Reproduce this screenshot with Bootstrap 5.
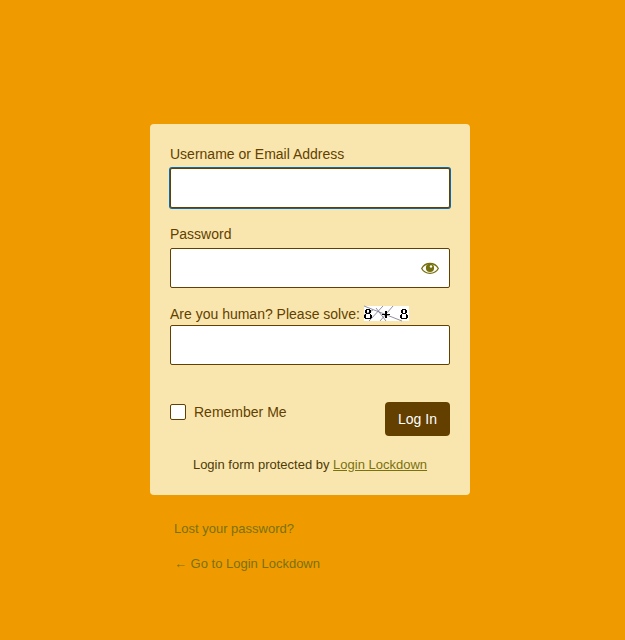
<!DOCTYPE html>
<html lang="en">
<head>
<meta charset="utf-8">
<meta name="viewport" content="width=device-width, initial-scale=1">
<title>Log In</title>
<link href="https://cdn.jsdelivr.net/npm/bootstrap@5.3.0/dist/css/bootstrap.min.css" rel="stylesheet">
<style>
body{background:#ef9b00;font-family:"Liberation Sans",Arial,sans-serif;font-size:14px;line-height:21px;color:#633f00;padding-top:124px}
.login-wrap{width:320px;margin-left:150px}
.login-card{height:371px;padding:20px;background:#f9e6ae;border:0;border-radius:4px;color:#633f00}
.login-card .form-label{margin-bottom:3px;height:21px}
.login-card .form-control{height:40px;padding:3px 5px;border:1px solid #633f00;border-radius:2px;font-size:24px;background:#fff;box-shadow:none}
.login-card .field-active{box-shadow:0 0 0 1px #0e68ae}
.field-gap{margin-bottom:16px}
.login-card .captcha-label{margin-bottom:0}
.captcha{margin-left:4px}
.eye{right:10px;top:10px}
.action-row{margin-top:37px;height:34px}
.login-card .form-check-input{width:16px;height:16px;margin:2px 8px 0 0;border:1px solid #633f00;border-radius:2px;background:#fff}
.btn-login{width:65px;height:34px;padding:0;background:#633f00;color:#fff;font-size:14px;border:0;border-radius:4px}
.btn-login:hover{background:#523400;color:#fff}
.protected{font-size:13px;line-height:20px;margin-top:19px;color:#4f3b08}
.protected a,.below a{color:#7a7110}
.below{font-size:13px;line-height:19px;padding:24px 24px 0}
</style>
<script src="https://cdn.jsdelivr.net/npm/bootstrap@5.3.0/dist/js/bootstrap.bundle.min.js"></script>
</head>
<body>
<main class="login-wrap">
  <form class="card login-card">
    <div class="field-gap">
      <label class="form-label d-block" for="user">Username or Email Address</label>
      <input id="user" class="form-control field-active" type="text">
    </div>
    <div class="field-gap">
      <label class="form-label d-block" for="pass">Password</label>
      <div class="position-relative">
        <input id="pass" class="form-control" type="password">
        <svg class="eye position-absolute" width="20" height="20" viewBox="0 0 20 20"><path d="M1.700 10.500C3.400 7.300 6.400 5.500 10 5.500S16.600 7.300 18.300 10.500C16.600 13.700 13.600 15.300 10 15.300S3.400 13.700 1.700 10.500Z" fill="none" stroke="#77700f" stroke-width="1.300"/><circle cx="10" cy="9.900" r="4.100" fill="#77700f"/><circle cx="11" cy="8.500" r="1.200" fill="#fff"/></svg>
      </div>
    </div>
    <div>
      <label class="form-label captcha-label d-flex" for="answer">Are you human? Please solve:
        <svg class="captcha flex-shrink-0" width="45" height="21" viewBox="0 -2 45 21" role="img" aria-label="8 + 8">
          <path fill="#fff" d="M0 0h45v15H0z"/>
          <path fill="none" stroke="#77748a" stroke-width=".8" d="M0 0L38 15M5 15L19 0M12 2L22 15M16 15L29 0M0 9L9 4"/>
          <g fill="#000" shape-rendering="crispEdges">
            <path id="eight" d="M2 3h4v1H2zM1 4h2v3H1zM5 4h2v3H5zM2 7h4v1H2zM1 8h1v1H1zM6 8h1v1H6zM0 9h2v3H0zM6 9h2v3H6zM1 12h2v1H1zM5 12h2v1H5zM2 12h4v1H2z"/>
            <use href="#eight" x="36"/>
            <path d="M18 8h8v1h-8zM21 5h2v7h-2z"/>
          </g>
        </svg>
      </label>
      <input id="answer" class="form-control" type="text">
    </div>
    <div class="action-row d-flex justify-content-between align-items-start">
      <label class="d-flex"><input class="form-check-input" type="checkbox"><span>Remember Me</span></label>
      <button class="btn btn-login" type="button">Log In</button>
    </div>
    <div class="protected text-center">Login form protected by <a href="#">Login Lockdown</a></div>
  </form>
  <nav class="below">
    <a class="d-block text-decoration-none mb-3" href="#">Lost your password?</a>
    <a class="d-block text-decoration-none" href="#">← Go to Login Lockdown</a>
  </nav>
</main>
</body>
</html>
